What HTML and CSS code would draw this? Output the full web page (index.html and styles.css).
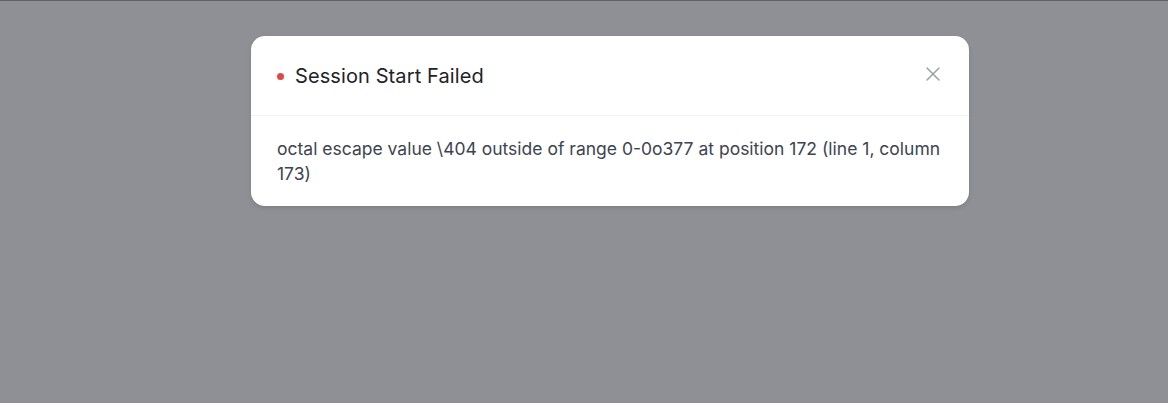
FILE: index.html
```html
<!DOCTYPE html>
<html lang="en">
<head>
    <meta charset="UTF-8">
    <meta name="viewport" content="width=device-width, initial-scale=1.0">
    <title>Session Start Failed</title>
    <link rel="stylesheet" href="styles.css">
</head>
<body>
<div class="overlay">
    <div class="dialog">
        <div class="dialog-header">
            <span class="status-dot"></span>
            <h2 class="dialog-title">Session Start Failed</h2>
            <button class="close-btn" aria-label="Close">
                <svg width="16" height="16" viewBox="0 0 16 16">
                    <path d="M2 2L14 14M14 2L2 14" stroke="currentColor" stroke-width="1.5" fill="none" stroke-linecap="round"/>
                </svg>
            </button>
        </div>
        <div class="dialog-body">
            octal escape value \404 outside of range 0-0o377 at position 172 (line 1, column 173)
        </div>
    </div>
</div>
</body>
</html>
```

FILE: styles.css
```css
body {
    margin: 0;
    font-family: Inter, "Noto Sans", sans-serif;
    background: #8e9095;
    height: 403px;
    overflow: hidden;
}
.overlay {
    border-top: 1px solid #5f6266;
    padding-top: 35px;
    display: flex;
    justify-content: center;
}
.dialog {
    width: 718px;
    background: #ffffff;
    border-radius: 14px;
    box-shadow: 0 2px 4px rgba(0, 0, 0, 0.12);
    margin-left: 52px;
}
.dialog-header {
    display: flex;
    align-items: center;
    height: 79px;
    padding: 0 28px 0 26px;
    border-bottom: 1px solid #f0f1f3;
}
.status-dot {
    width: 7px;
    height: 7px;
    border-radius: 50%;
    background: #e04848;
    margin-right: 11px;
    margin-top: 1px;
}
.dialog-title {
    flex: 1;
    margin: 0;
    font-size: 20px;
    font-weight: 400;
    letter-spacing: 0.1px;
    color: #1f2329;
}
.close-btn {
    border: none;
    background: none;
    padding: 0;
    color: #9aa0a8;
    cursor: pointer;
    display: flex;
    margin-top: -4px;
}
.dialog-body {
    padding: 20px 22px 20px 26px;
    font-size: 17.5px;
    line-height: 25px;
    color: #3e4450;
}
```
